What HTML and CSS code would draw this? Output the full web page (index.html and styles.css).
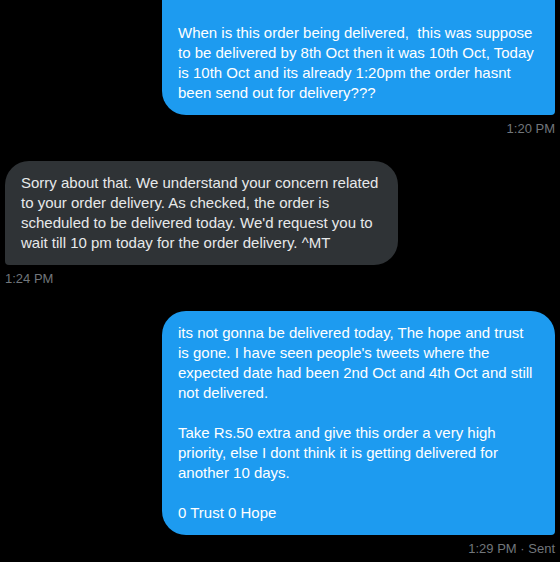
FILE: index.html
```html
<!DOCTYPE html>
<html lang="en">
<head>
<meta charset="utf-8">
<title>Messages</title>
<link rel="stylesheet" href="styles.css">
</head>
<body>
<main class="chat">
  <div class="msg msg--sent">
    <div class="bubble bubble--sent bubble--cut">When is this order being delivered,  this was suppose
to be delivered by 8th Oct then it was 10th Oct, Today
is 10th Oct and its already 1:20pm the order hasnt
been send out for delivery???</div>
    <div class="meta">1:20 PM</div>
  </div>

  <div class="msg msg--recv">
    <div class="bubble bubble--recv">Sorry about that. We understand your concern related
to your order delivery. As checked, the order is
scheduled to be delivered today. We'd request you to
wait till 10 pm today for the order delivery. ^MT</div>
    <div class="meta">1:24 PM</div>
  </div>

  <div class="msg msg--sent">
    <div class="bubble bubble--sent">its not gonna be delivered today, The hope and trust
is gone. I have seen people's tweets where the
expected date had been 2nd Oct and 4th Oct and still
not delivered.

Take Rs.50 extra and give this order a very high
priority, else I dont think it is getting delivered for
another 10 days.

0 Trust 0 Hope</div>
    <div class="meta">1:29 PM · Sent</div>
  </div>
</main>
</body>
</html>
```

FILE: styles.css
```css
html, body {
  margin: 0;
  padding: 0;
  background: #000;
}

body {
  width: 560px;
  height: 562px;
  overflow: hidden;
  font-family: "Liberation Sans", Arial, sans-serif;
}

.chat {
  display: flex;
  flex-direction: column;
  gap: 24px;
  padding: 0 5px;
}

.msg {
  display: flex;
  flex-direction: column;
}

.msg--sent {
  align-items: flex-end;
}

.msg--recv {
  align-items: flex-start;
}

.bubble {
  box-sizing: border-box;
  width: 393px;
  padding: 12px 16px;
  font-size: 15px;
  line-height: 20px;
  white-space: pre;
  border-radius: 24px;
}

.bubble--sent {
  background: #1d9bf0;
  color: #ffffff;
  border-bottom-right-radius: 4px;
}

.bubble--recv {
  background: #2f3336;
  color: #e7e9ea;
  border-bottom-left-radius: 4px;
}

.bubble--cut {
  padding-top: 23px;
  border-top-left-radius: 0;
  border-top-right-radius: 0;
}

.meta {
  margin-top: 6px;
  font-size: 13px;
  line-height: 16px;
  color: #71767b;
}
```
